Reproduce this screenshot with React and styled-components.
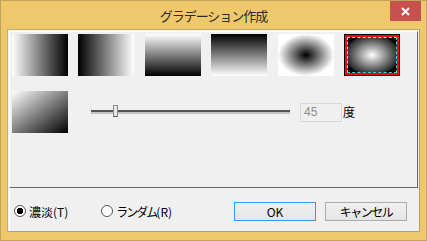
import React from 'react';
import styled, { createGlobalStyle } from 'styled-components';

const GlobalStyle = createGlobalStyle`
  html, body {
    margin: 0;
    padding: 0;
    background: #f0c86c;
  }
  body {
    font-family: "Noto Sans CJK JP", "Noto Sans", sans-serif;
    font-size: 12px;
    color: #000;
  }
`;

const Window = styled.div`
  width: 427px;
  height: 241px;
  box-sizing: border-box;
  border: 1px solid #c0a45c;
  background: #f0c86c;
  display: flex;
  flex-direction: column;
  padding: 0 6px 8px 6px;
`;

const TitleBar = styled.div`
  height: 28px;
  display: grid;
  grid-template-columns: 1fr auto 1fr;
  margin: 0 -6px;
`;

const Title = styled.div`
  grid-column: 2;
  align-self: center;
  font-size: 13px;
  letter-spacing: -1px;
  color: #2b2b2b;
  padding-top: 1px;
`;

const CloseButton = styled.div`
  grid-column: 3;
  justify-self: end;
  align-self: start;
  width: 31px;
  height: 20px;
  margin-right: 5px;
  background: #c75050;
  display: flex;
  align-items: center;
  justify-content: center;
`;

const Client = styled.div`
  flex: 1;
  display: flex;
  flex-direction: column;
  border: 1px solid #c9ae66;
  border-bottom-color: #a0a0a0;
  border-right-color: #b0a070;
  background: #f0f0f0;
  padding: 1px 1px 0 1px;
`;

const Panel = styled.div`
  height: 157px;
  box-sizing: border-box;
  border-top: 1px solid #fff;
  border-left: 1px solid #fff;
  border-right: 1px solid #696969;
  border-bottom: 1px solid #696969;
  padding: 2px 0 0 2px;
  display: flex;
  flex-direction: column;
  gap: 15px;
`;

const ThumbRow = styled.div`
  display: flex;
  align-items: center;
  gap: ${({ $gap }) => $gap};
`;

const Thumb = styled.div`
  position: relative;
  width: 56px;
  height: 42px;
  box-sizing: border-box;
  flex: none;
  background: ${({ $bg }) => $bg};
  ${({ $selected }) =>
    $selected &&
    `
    border: 1px solid #000;
    box-shadow: inset 0 0 0 2px #ff0000;
    &::after {
      content: '';
      position: absolute;
      inset: 2px;
      border: 1px dashed #fff;
      border-right-color: #33dddd;
      border-bottom-color: #33dddd;
    }
  `}
`;

const SliderTrack = styled.div`
  position: relative;
  width: 199px;
  height: 4px;
  margin-left: 23px;
  box-sizing: border-box;
  border-top: 2px solid #555;
  border-bottom: 2px solid #c2c2c2;
`;

const SliderThumb = styled.div`
  position: absolute;
  top: -7px;
  width: 3px;
  height: 10px;
  background: #e8e8e8;
  border: 1px solid #8a8a8a;
  border-bottom-color: #555;
`;

const ValueBox = styled.div`
  width: 42px;
  height: 19px;
  box-sizing: border-box;
  margin-left: 10px;
  border: 1px solid #d9d9d9;
  background: #f0f0f0;
  color: #8d8d8d;
  font-family: "Liberation Sans", Arial, sans-serif;
  font-size: 12px;
  line-height: 17px;
  padding-left: 3px;
`;

const Unit = styled.span`
  margin-left: 1px;
  font-size: 12px;
  margin-top: -2px;
`;

const BottomPanel = styled.div`
  flex: 1;
  border-left: 1px solid #fff;
  display: flex;
  align-items: center;
  padding: 3px 11px 0 4px;
`;

const RadioGroup = styled.label`
  display: flex;
  align-items: center;
  gap: 3px;
  margin-right: ${({ $mr }) => $mr || '0'};
`;

const RadioCircle = styled.span`
  width: 12px;
  height: 12px;
  box-sizing: border-box;
  border-radius: 50%;
  border: 1px solid #555;
  background: ${({ $checked }) =>
    $checked ? 'radial-gradient(circle, #000 0 3px, #fff 3.5px)' : '#fff'};
`;

const RadioText = styled.span`
  font-size: 12px;
`;

const Kana = styled.span`
  letter-spacing: -2px;
`;

const Buttons = styled.div`
  margin-left: auto;
  display: flex;
  gap: 9px;
`;

const Button = styled.div`
  width: 82px;
  height: 19px;
  box-sizing: border-box;
  border: 1px solid ${({ $default }) => ($default ? '#3399ff' : '#acacac')};
  background: linear-gradient(#f0f0f0, #e5e5e5);
  display: flex;
  align-items: center;
  justify-content: center;
  font-size: 12px;
  letter-spacing: ${({ $ls }) => $ls || '0'};
`;

const gradients = [
  'linear-gradient(to right, #fff, #000)',
  'linear-gradient(to right, #000, #fff)',
  'linear-gradient(to bottom, #fff, #000)',
  'linear-gradient(to bottom, #000, #fff)',
  'radial-gradient(ellipse closest-side, #000 0%, #fff 100%)',
  'radial-gradient(ellipse closest-side, #fff 0%, #222 100%, #000)',
];

const Slider = ({ value }) => (
  <SliderTrack>
    <SliderThumb style={{ left: `${value}%` }} />
  </SliderTrack>
);

export default function App() {
  return (
    <>
      <GlobalStyle />
      <Window>
        <TitleBar>
          <Title>グラデーション作成</Title>
          <CloseButton>
            <svg width="9" height="9" viewBox="0 0 9 9">
              <path d="M1 1L8 8M8 1L1 8" stroke="#fff" strokeWidth="2" />
            </svg>
          </CloseButton>
        </TitleBar>
        <Client>
          <Panel>
            <ThumbRow $gap="10.4px">
              {gradients.map((g, i) => (
                <Thumb key={i} $bg={g} $selected={i === 5} />
              ))}
            </ThumbRow>
            <ThumbRow>
              <Thumb $bg="linear-gradient(to bottom right, #fff, #000)" />
              <Slider value={11} />
              <ValueBox>45</ValueBox>
              <Unit>度</Unit>
            </ThumbRow>
          </Panel>
          <BottomPanel>
            <RadioGroup $mr="33px">
              <RadioCircle $checked />
              <RadioText>濃淡(T)</RadioText>
            </RadioGroup>
            <RadioGroup>
              <RadioCircle />
              <RadioText>
                <Kana>ランダム</Kana>(R)
              </RadioText>
            </RadioGroup>
            <Buttons>
              <Button $default>OK</Button>
              <Button $ls="-1.5px">キャンセル</Button>
            </Buttons>
          </BottomPanel>
        </Client>
      </Window>
    </>
  );
}
